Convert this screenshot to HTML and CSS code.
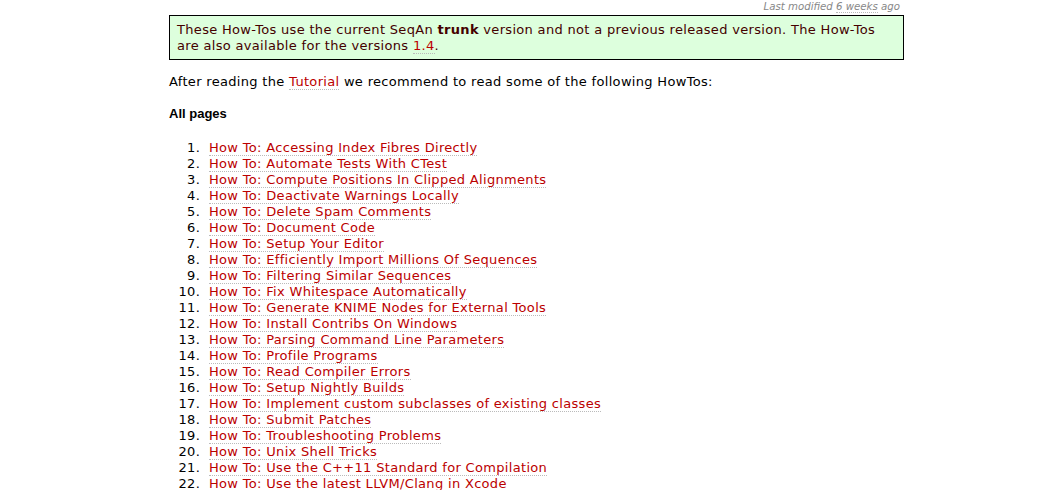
FILE: index.html
```html
<!DOCTYPE html>
<html>
<head>
<meta charset="utf-8">
<link rel="stylesheet" href="styles.css">
</head>
<body>
<div class="page">
  <div class="lastmod">Last modified <a class="dotted" href="#">6 weeks</a> ago</div>
  <div class="notice">These How-Tos use the current SeqAn <b>trunk</b> version and not a previous released version. The How-Tos are also available for the versions <a href="#">1.4</a>.</div>
  <p class="intro">After reading the <a href="#">Tutorial</a> we recommend to read some of the following HowTos:</p>
  <h4 class="heading">All pages</h4>
  <ol class="pages">
    <li><a href="#">How To: Accessing Index Fibres Directly</a></li>
    <li><a href="#">How To: Automate Tests With CTest</a></li>
    <li><a href="#">How To: Compute Positions In Clipped Alignments</a></li>
    <li><a href="#">How To: Deactivate Warnings Locally</a></li>
    <li><a href="#">How To: Delete Spam Comments</a></li>
    <li><a href="#">How To: Document Code</a></li>
    <li><a href="#">How To: Setup Your Editor</a></li>
    <li><a href="#">How To: Efficiently Import Millions Of Sequences</a></li>
    <li><a href="#">How To: Filtering Similar Sequences</a></li>
    <li><a href="#">How To: Fix Whitespace Automatically</a></li>
    <li><a href="#">How To: Generate KNIME Nodes for External Tools</a></li>
    <li><a href="#">How To: Install Contribs On Windows</a></li>
    <li><a href="#">How To: Parsing Command Line Parameters</a></li>
    <li><a href="#">How To: Profile Programs</a></li>
    <li><a href="#">How To: Read Compiler Errors</a></li>
    <li><a href="#">How To: Setup Nightly Builds</a></li>
    <li><a href="#">How To: Implement custom subclasses of existing classes</a></li>
    <li><a href="#">How To: Submit Patches</a></li>
    <li><a href="#">How To: Troubleshooting Problems</a></li>
    <li><a href="#">How To: Unix Shell Tricks</a></li>
    <li><a href="#">How To: Use the C++11 Standard for Compilation</a></li>
    <li><a href="#">How To: Use the latest LLVM/Clang in Xcode</a></li>
  </ol>
</div>
</body>
</html>
```
FILE: styles.css
```css
html, body {
  margin: 0;
  padding: 0;
  background: #fff;
}
body {
  font-family: "DejaVu Sans", Verdana, sans-serif;
  font-size: 13px;
  letter-spacing: 0.32px;
  line-height: 16px;
  color: #000;
}
.page {
  width: 735px;
  margin-left: 169px;
}
a {
  color: #b00;
  text-decoration: none;
  border-bottom: 1px dotted #bbb;
}
.lastmod {
  text-align: right;
  font-style: italic;
  font-size: 10.2px;
  letter-spacing: 0;
  line-height: 13px;
  color: #888;
  padding-right: 4px;
  height: 15px;
}
.lastmod a {
  color: #888;
}
.notice {
  background: #dfd;
  border: 1px solid #000;
  padding: 6px 7px 5px 7px;
  color: #400;
}
.notice b {
  color: #400;
}
.intro {
  margin: 14px 0 0 0;
}
.heading {
  font-family: "Liberation Sans", Arial, sans-serif;
  font-size: 13px;
  letter-spacing: 0;
  font-weight: bold;
  margin: 16px 0 0 0;
}
.pages {
  margin: 18px 0 0 0;
  padding-left: 40px;
}
.pages li::marker {
  content: counter(list-item) ".\00a0\00a0";
}
```
